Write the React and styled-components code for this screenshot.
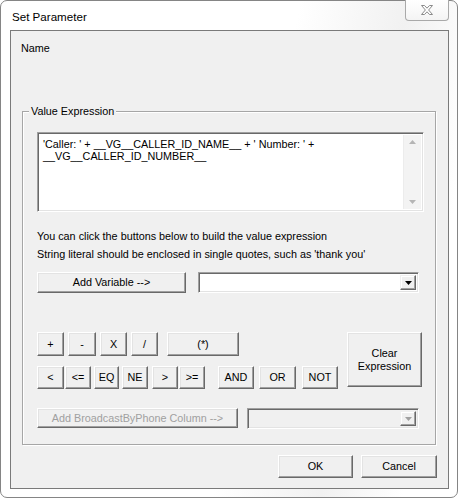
import React from "react";
import styled, { createGlobalStyle } from "styled-components";

const GlobalStyle = createGlobalStyle`
  html, body { margin: 0; padding: 0; background: #ffffff; }
  body { font-family: "Liberation Sans", Arial, sans-serif; }
  #root { width: 458px; height: 498px; }
`;

const Window = styled.div`
  box-sizing: border-box;
  width: 458px;
  height: 498px;
  border: 1px solid #858585;
  border-radius: 7px;
  background: linear-gradient(100deg, #ffffff 0%, #ffffff 55%, #f1f1f1 75%, #ffffff 90%);
  display: flex;
  flex-direction: column;
  padding: 0 8px 8px 9px;
  font-family: "Liberation Sans", Arial, sans-serif;
  font-size: 10.8px;
  color: #000;
`;

const TitleBar = styled.div`
  height: 29px;
  flex: none;
  display: flex;
  align-items: flex-start;
`;

const Title = styled.div`
  font-size: 11.6px;
  line-height: 14px;
  margin-top: 9px;
  padding-left: 2px;
  flex: 1;
`;

const CloseButton = styled.div`
  box-sizing: border-box;
  width: 44px;
  height: 21px;
  margin-top: -1px;
  margin-right: 0;
  border: 1px solid #a9a9a9;
  border-top: none;
  border-radius: 0 0 4px 4px;
  background: linear-gradient(#ffffff, #f4f4f4);
  display: flex;
  align-items: center;
  justify-content: center;
`;

const Client = styled.div`
  flex: 1;
  border: 1px solid #7a7a7a;
  background: #f0f0f0;
  display: flex;
  flex-direction: column;
  padding: 11px 11px 0 10px;
`;

const Label = styled.div`
  line-height: 13px;
`;

const Group = styled.div`
  position: relative;
  box-sizing: border-box;
  margin: 56px 0 0 1px;
  width: 414px;
  height: 334px;
  border: 1px solid #a6a6a6;
  box-shadow: inset 1px 1px #fff, 1px 1px #fff;
  padding: 20px 0 0 14px;
  display: flex;
  flex-direction: column;
`;

const Legend = styled.div`
  position: absolute;
  top: -7px;
  left: 6px;
  padding: 0 2px;
  line-height: 13px;
  background: #f0f0f0;
`;

const Sunken = styled.div`
  box-sizing: border-box;
  border: 1px solid;
  border-color: #a0a0a0 #ffffff #ffffff #a0a0a0;
  box-shadow: inset 1px 1px #696969, inset -1px -1px #e3e3e3;
  background: ${(p) => (p.$disabled ? "#f0f0f0" : "#ffffff")};
  display: flex;
  width: ${(p) => p.$w}px;
  height: ${(p) => p.$h}px;
  padding: 2px 2px 2px 2px;
`;

const ExprText = styled.div`
  flex: 1;
  padding: 3px 3px;
  line-height: 12px;
  white-space: pre;
`;

const ScrollBar = styled.div`
  width: 17px;
  background: #f3f3f3;
  border-left: 1px solid #ececec;
  display: flex;
  flex-direction: column;
  justify-content: space-between;
  align-items: center;
  padding: 5px 0;
`;

const Hints = styled.div`
  margin-top: 15px;
  line-height: 18px;
`;

const Row = styled.div`
  display: flex;
  align-items: flex-start;
  margin-top: ${(p) => p.$mt || 0}px;
  gap: ${(p) => p.$gap || 0}px;
`;

const Button = styled.div`
  box-sizing: border-box;
  width: ${(p) => p.$w}px;
  height: ${(p) => p.$h || 21}px;
  margin-left: ${(p) => p.$ml || 0}px;
  border: 1px solid;
  border-color: #ffffff #696969 #696969 #ffffff;
  box-shadow: inset -1px -1px #a0a0a0, inset 1px 1px #e3e3e3;
  background: #f0f0f0;
  color: ${(p) => (p.$disabled ? "#a0a0a0" : "#000")};
  display: flex;
  align-items: center;
  justify-content: center;
  text-align: center;
  line-height: 13px;
  flex: none;
`;

const Ops = styled.div`
  display: flex;
  margin-top: 39px;
`;

const OpRows = styled.div`
  display: flex;
  flex-direction: column;
  gap: 10px;
  width: 310px;
`;

const Footer = styled.div`
  display: flex;
  justify-content: flex-end;
  gap: 8px;
  margin: 10px 0 0 0;
`;

const Combo = styled(Sunken)`
  align-items: stretch;
  justify-content: flex-end;
`;

const DropButton = styled.div`
  width: 16px;
  box-sizing: border-box;
  border: 1px solid;
  border-color: #f0f0f0 #696969 #696969 #f0f0f0;
  box-shadow: inset -1px -1px #a0a0a0, inset 1px 1px #fff;
  background: #f0f0f0;
  display: flex;
  align-items: center;
  justify-content: center;
`;

const Arrow = ({ up, color = "#000", w = 7 }) => (
  <svg width={w} height={4} viewBox="0 0 7 4">
    {up ? (
      <polygon points="0,4 7,4 3.5,0" fill={color} />
    ) : (
      <polygon points="0,0 7,0 3.5,4" fill={color} />
    )}
  </svg>
);

const CloseIcon = () => (
  <svg width="14" height="12" viewBox="0 0 14 12">
    <path
      d="M1.5 1.5 H4.5 L7 4.2 L9.5 1.5 H12.5 L8.6 6 L12.5 10.5 H9.5 L7 7.8 L4.5 10.5 H1.5 L5.4 6 Z"
      fill="#ffffff"
      stroke="#8a8a8a"
      strokeWidth="1"
      strokeLinejoin="round"
    />
  </svg>
);

const ComboBox = ({ w, disabled }) => (
  <Combo $w={w} $h={21} $disabled={disabled}>
    <DropButton>
      <Arrow color={disabled ? "#a0a0a0" : "#000"} />
    </DropButton>
  </Combo>
);

export default function App() {
  return (
    <>
      <GlobalStyle />
      <Window>
        <TitleBar>
          <Title>Set Parameter</Title>
          <CloseButton>
            <CloseIcon />
          </CloseButton>
        </TitleBar>
        <Client>
          <Label>Name</Label>
          <Group>
            <Legend>Value Expression</Legend>
            <Sunken $w={387} $h={80}>
              <ExprText>
                {"'Caller: ' + __VG__CALLER_ID_NAME__ + ' Number: ' +\n__VG__CALLER_ID_NUMBER__"}
              </ExprText>
              <ScrollBar>
                <Arrow up color="#b5b5b5" />
                <Arrow color="#b5b5b5" />
              </ScrollBar>
            </Sunken>
            <Hints>
              <div>You can click the buttons below to build the value expression</div>
              <div>String literal should be enclosed in single quotes, such as 'thank you'</div>
            </Hints>
            <Row $mt={9} $gap={12}>
              <Button $w={149}>Add Variable --&gt;</Button>
              <ComboBox w={221} />
            </Row>
            <Ops>
              <OpRows>
                <Row>
                  <Button $w={27} $h={24}>+</Button>
                  <Button $w={28} $h={24} $ml={4}>-</Button>
                  <Button $w={27} $h={24} $ml={4}>X</Button>
                  <Button $w={27} $h={24} $ml={4}>/</Button>
                  <Button $w={72} $h={24} $ml={9}>(*)</Button>
                </Row>
                <Row>
                  <Button $w={27} $h={23}>&lt;</Button>
                  <Button $w={26} $h={23} $ml={1}>&lt;=</Button>
                  <Button $w={25} $h={23} $ml={3}>EQ</Button>
                  <Button $w={26} $h={23} $ml={3}>NE</Button>
                  <Button $w={26} $h={23} $ml={4}>&gt;</Button>
                  <Button $w={26} $h={23} $ml={1}>&gt;=</Button>
                  <Button $w={36} $h={23} $ml={13}>AND</Button>
                  <Button $w={37} $h={23} $ml={5}>OR</Button>
                  <Button $w={36} $h={23} $ml={6}>NOT</Button>
                </Row>
              </OpRows>
              <Button $w={75} $h={55}>
                Clear
                <br />
                Expression
              </Button>
            </Ops>
            <Row $mt={19} $gap={9}>
              <Button $w={201} $h={20} $disabled>
                Add BroadcastByPhone Column --&gt;
              </Button>
              <ComboBox w={172} disabled />
            </Row>
          </Group>
          <Footer>
            <Button $w={75} $h={23}>OK</Button>
            <Button $w={76} $h={23}>Cancel</Button>
          </Footer>
        </Client>
      </Window>
    </>
  );
}
